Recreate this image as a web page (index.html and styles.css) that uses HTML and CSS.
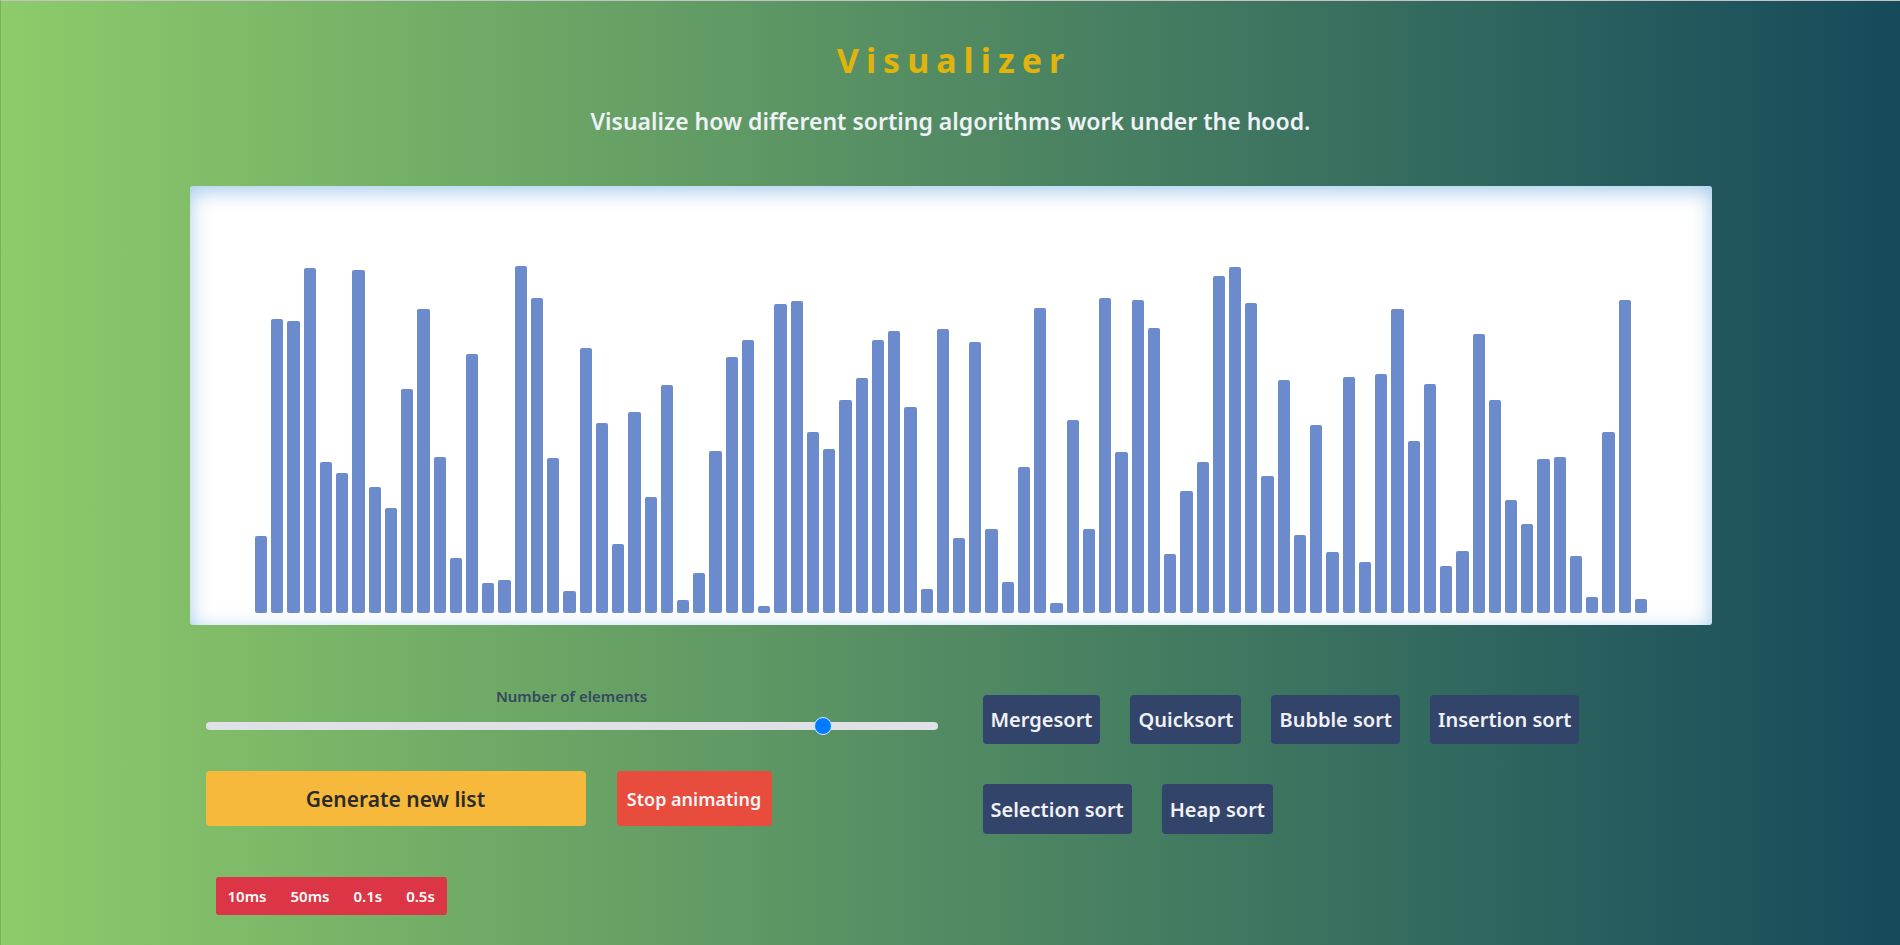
FILE: index.html
```html
<!DOCTYPE html>
<html lang="en">
<head>
<meta charset="utf-8">
<title>Sorting Visualizer</title>
<link rel="stylesheet" href="styles.css">
</head>
<body>
<div class="page">
  <header class="header">
    <h1 class="title">Visualizer</h1>
    <p class="subtitle">Visualize how different sorting algorithms work under the hood.</p>
  </header>

  <section class="chart">
    <div class="bars">
      <div class="bar" style="height:77px"></div>
      <div class="bar" style="height:294px"></div>
      <div class="bar" style="height:292px"></div>
      <div class="bar" style="height:345px"></div>
      <div class="bar" style="height:151px"></div>
      <div class="bar" style="height:140px"></div>
      <div class="bar" style="height:343px"></div>
      <div class="bar" style="height:126px"></div>
      <div class="bar" style="height:105px"></div>
      <div class="bar" style="height:224px"></div>
      <div class="bar" style="height:304px"></div>
      <div class="bar" style="height:156px"></div>
      <div class="bar" style="height:55px"></div>
      <div class="bar" style="height:259px"></div>
      <div class="bar" style="height:30px"></div>
      <div class="bar" style="height:33px"></div>
      <div class="bar" style="height:347px"></div>
      <div class="bar" style="height:315px"></div>
      <div class="bar" style="height:155px"></div>
      <div class="bar" style="height:22px"></div>
      <div class="bar" style="height:265px"></div>
      <div class="bar" style="height:190px"></div>
      <div class="bar" style="height:69px"></div>
      <div class="bar" style="height:201px"></div>
      <div class="bar" style="height:116px"></div>
      <div class="bar" style="height:228px"></div>
      <div class="bar" style="height:13px"></div>
      <div class="bar" style="height:40px"></div>
      <div class="bar" style="height:162px"></div>
      <div class="bar" style="height:256px"></div>
      <div class="bar" style="height:273px"></div>
      <div class="bar" style="height:7px"></div>
      <div class="bar" style="height:309px"></div>
      <div class="bar" style="height:312px"></div>
      <div class="bar" style="height:181px"></div>
      <div class="bar" style="height:164px"></div>
      <div class="bar" style="height:213px"></div>
      <div class="bar" style="height:235px"></div>
      <div class="bar" style="height:273px"></div>
      <div class="bar" style="height:282px"></div>
      <div class="bar" style="height:206px"></div>
      <div class="bar" style="height:24px"></div>
      <div class="bar" style="height:284px"></div>
      <div class="bar" style="height:75px"></div>
      <div class="bar" style="height:271px"></div>
      <div class="bar" style="height:84px"></div>
      <div class="bar" style="height:31px"></div>
      <div class="bar" style="height:146px"></div>
      <div class="bar" style="height:305px"></div>
      <div class="bar" style="height:10px"></div>
      <div class="bar" style="height:193px"></div>
      <div class="bar" style="height:84px"></div>
      <div class="bar" style="height:315px"></div>
      <div class="bar" style="height:161px"></div>
      <div class="bar" style="height:313px"></div>
      <div class="bar" style="height:285px"></div>
      <div class="bar" style="height:59px"></div>
      <div class="bar" style="height:122px"></div>
      <div class="bar" style="height:151px"></div>
      <div class="bar" style="height:337px"></div>
      <div class="bar" style="height:346px"></div>
      <div class="bar" style="height:310px"></div>
      <div class="bar" style="height:137px"></div>
      <div class="bar" style="height:233px"></div>
      <div class="bar" style="height:78px"></div>
      <div class="bar" style="height:188px"></div>
      <div class="bar" style="height:61px"></div>
      <div class="bar" style="height:236px"></div>
      <div class="bar" style="height:51px"></div>
      <div class="bar" style="height:239px"></div>
      <div class="bar" style="height:304px"></div>
      <div class="bar" style="height:172px"></div>
      <div class="bar" style="height:229px"></div>
      <div class="bar" style="height:47px"></div>
      <div class="bar" style="height:62px"></div>
      <div class="bar" style="height:279px"></div>
      <div class="bar" style="height:213px"></div>
      <div class="bar" style="height:113px"></div>
      <div class="bar" style="height:89px"></div>
      <div class="bar" style="height:154px"></div>
      <div class="bar" style="height:156px"></div>
      <div class="bar" style="height:57px"></div>
      <div class="bar" style="height:16px"></div>
      <div class="bar" style="height:181px"></div>
      <div class="bar" style="height:313px"></div>
      <div class="bar" style="height:14px"></div>
    </div>
  </section>

  <section class="controls">
    <div class="controls-left">
      <label class="range-label" for="count">Number of elements</label>
      <input class="range" id="count" type="range" min="5" max="100" value="86">
      <div class="actions">
        <button class="btn btn-generate">Generate new list</button>
        <button class="btn btn-stop">Stop animating</button>
      </div>
      <div class="speed-group">
        <button class="speed-btn">10ms</button>
        <button class="speed-btn">50ms</button>
        <button class="speed-btn">0.1s</button>
        <button class="speed-btn">0.5s</button>
      </div>
    </div>
    <div class="controls-right">
      <div class="algo-row">
        <button class="btn btn-algo">Mergesort</button>
        <button class="btn btn-algo">Quicksort</button>
        <button class="btn btn-algo">Bubble sort</button>
        <button class="btn btn-algo">Insertion sort</button>
      </div>
      <div class="algo-row">
        <button class="btn btn-algo">Selection sort</button>
        <button class="btn btn-algo">Heap sort</button>
      </div>
    </div>
  </section>
</div>
</body>
</html>
```

FILE: styles.css
```css
* {
  box-sizing: border-box;
}

html, body {
  margin: 0;
  padding: 0;
}

body {
  font-family: "Noto Sans", "Open Sans", sans-serif;
  background: linear-gradient(to right, #8ecb6a 0%, #154a5b 100%);
  min-height: 100vh;
}

.page {
  min-height: 945px;
  border-top: 1px solid #c4c4c4;
  border-left: 1px solid #72b258;
  overflow: hidden;
}

.header {
  text-align: center;
  padding-top: 39px;
}

.title {
  margin: 0;
  font-size: 34px;
  line-height: 40px;
  font-weight: 700;
  letter-spacing: 7px;
  color: #e1b40b;
  padding-left: 7px;
}

.subtitle {
  margin: 26px 0 0;
  font-size: 23px;
  line-height: 30px;
  font-weight: 600;
  color: #eef1f6;
}

.chart {
  width: 1522px;
  height: 439px;
  margin: 50px 0 0 189px;
  background: #ffffff;
  border-radius: 3px;
  box-shadow: inset 0 5px 20px rgba(70, 150, 215, 0.5);
}

.bars {
  height: 100%;
  display: flex;
  justify-content: center;
  align-items: flex-end;
  padding-bottom: 12px;
}

.bar {
  width: 12.24px;
  margin: 0 2px;
  background: #6b8bcc;
  border-radius: 2px;
}

.controls {
  width: 1520px;
  margin: 62px auto 0;
  padding: 0 15px;
  display: flex;
}

.controls-left {
  width: 732px;
  display: flex;
  flex-direction: column;
}

.range-label {
  display: block;
  text-align: center;
  font-size: 15px;
  line-height: 18px;
  font-weight: 600;
  color: #34495e;
}

.range {
  -webkit-appearance: none;
  appearance: none;
  width: 732px;
  height: 18px;
  margin: 12px 0 0;
  background: transparent;
}

.range::-webkit-slider-runnable-track {
  height: 8px;
  background: #dee2e6;
  border-radius: 4px;
}

.range::-webkit-slider-thumb {
  -webkit-appearance: none;
  width: 18px;
  height: 18px;
  margin-top: -5px;
  border-radius: 50%;
  background: #007bff;
  border: 1px solid #d6e9ff;
}

.actions {
  display: flex;
  gap: 31px;
  margin-top: 36px;
}

.btn {
  border: none;
  border-radius: 4px;
  font-family: "Noto Sans", "Open Sans", sans-serif;
  font-weight: 600;
  cursor: pointer;
}

.btn-generate {
  width: 380px;
  height: 55px;
  background: #f6b93b;
  color: #2b2b2b;
  font-size: 21px;
}

.btn-stop {
  width: 155px;
  height: 55px;
  background: #e74c3c;
  color: #f4f4f6;
  font-size: 18px;
  padding: 0 4px;
}

.speed-group {
  display: flex;
  align-self: flex-start;
  margin: 51px 0 0 10px;
  background: #dc3545;
  border-radius: 3px;
  height: 38px;
}

.speed-btn {
  border: none;
  background: transparent;
  color: #ffffff;
  font-family: "Noto Sans", "Open Sans", sans-serif;
  font-size: 15px;
  font-weight: 600;
  padding: 0 12px;
  height: 38px;
}

.controls-right {
  margin-left: 45px;
  padding-top: 8px;
  display: flex;
  flex-direction: column;
  gap: 40px;
}

.algo-row {
  display: flex;
  gap: 30px;
}

.btn-algo {
  height: 49px;
  padding: 0 8px;
  background: #33446b;
  color: #f0f1f5;
  font-size: 20px;
}

.algo-row + .algo-row .btn-algo {
  height: 50px;
}
```
